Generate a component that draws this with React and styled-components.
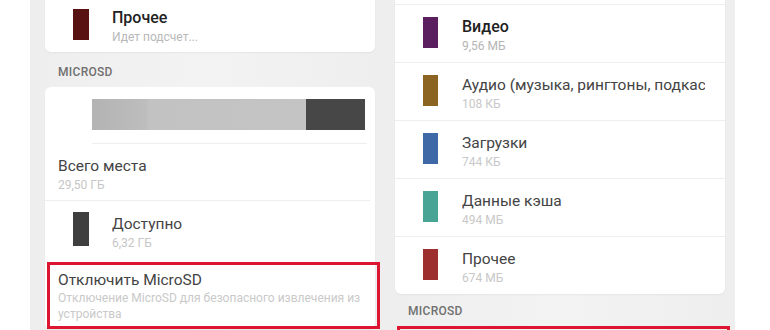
import React from "react";
import styled, { createGlobalStyle } from "styled-components";

const Global = createGlobalStyle`
  html, body { margin: 0; padding: 0; background: #ffffff; }
  body { font-family: Roboto, "Noto Sans", "Liberation Sans", sans-serif; }
  * { box-sizing: border-box; }
`;

const Page = styled.div`
  display: flex;
  height: 330px;
  width: 770px;
  overflow: hidden;
  padding-left: 30px;
  background: #ffffff;
`;

const Phone = styled.div`
  width: ${(p) => p.$w}px;
  height: 330px;
  padding: 0 ${(p) => p.$pr}px 0 ${(p) => p.$pl}px;
  background: linear-gradient(90deg, #eeeeee 0%, #f3f3f3 50%, #eeeeee 100%);
  display: flex;
  flex-direction: column;
`;

const Card = styled.div`
  background: #ffffff;
  border-radius: ${(p) => (p.$top ? "0 0 6px 6px" : "6px")};
  box-shadow: 0 1px 2px rgba(0, 0, 0, 0.05);
  padding-top: ${(p) => p.$pt || 0}px;
  flex-shrink: 0;
`;

const Row = styled.div`
  display: flex;
  align-items: flex-start;
  height: ${(p) => p.$h}px;
  padding-left: 28px;
  border-top: ${(p) => (p.$line ? "1px solid #eeeeee" : "none")};
`;

const Swatch = styled.div`
  width: ${(p) => p.$w || 16}px;
  height: ${(p) => p.$hh || 31}px;
  margin-top: ${(p) => p.$mt}px;
  margin-right: ${(p) => p.$gap || 23}px;
  background: ${(p) => p.$c};
  flex-shrink: 0;
`;

const TextBlock = styled.div`
  margin-top: ${(p) => p.$mt}px;
  min-width: 0;
  flex: 1;
  overflow: hidden;
  padding-right: ${(p) => p.$pr || 0}px;
`;

const Title = styled.div`
  font-size: ${(p) => (p.$big ? 15.5 : 16)}px;
  line-height: 20px;
  font-weight: ${(p) => (p.$bold ? 500 : 400)};
  color: ${(p) => (p.$bold ? "#222222" : "#444444")};
  white-space: nowrap;
  overflow: hidden;
`;

const Sub = styled.div`
  font-size: 12px;
  line-height: 16px;
  margin-top: 1px;
  color: ${(p) => p.$c || "#c6c6c6"};
  white-space: nowrap;
`;

const SubWrap = styled.div`
  font-size: 12px;
  line-height: 16px;
  color: #c9c9c9;
`;

const Label = styled.div`
  font-size: 12px;
  line-height: 14px;
  font-weight: 500;
  letter-spacing: 0.3px;
  color: #707070;
  padding: ${(p) => p.$pt}px 0 ${(p) => p.$pb}px 13px;
  flex-shrink: 0;
`;

const BarWrap = styled.div`
  display: flex;
  height: 31px;
  margin: 0 10px 0 47px;
`;

const BarUsed = styled.div`
  flex: 1;
  background: linear-gradient(
    90deg,
    #b3b3b3 0%,
    #bdbdbd 25%,
    #c2c2c2 27%,
    #c4c4c4 100%
  );
`;

const BarFree = styled.div`
  width: 59px;
  background: #474747;
`;

const Divider = styled.div`
  height: 1px;
  background: #eeeeee;
  margin: ${(p) => p.$mt || 0}px ${(p) => p.$r || 0}px 0 ${(p) => p.$l || 0}px;
`;

const PlainRow = styled.div`
  height: 56px;
  padding: 12px 0 0 13px;
`;

const Highlight = styled.div`
  border: 3px solid #dc1530;
  margin-left: 2px;
  margin-right: -5px;
  margin-top: ${(p) => p.$mt || 0}px;
  padding: ${(p) => p.$pad || "5px 8px 4px"};
  height: ${(p) => (p.$h ? `${p.$h}px` : "auto")};
  flex-shrink: 0;
`;

const rightRows = [
  { c: "#5b1e5e", t: "Видео", s: "9,56 МБ", bold: true },
  { c: "#8c6421", t: "Аудио (музыка, рингтоны, подкасты)", s: "108 КБ" },
  { c: "#3f68a6", t: "Загрузки", s: "744 КБ" },
  { c: "#48a595", t: "Данные кэша", s: "494 МБ" },
  { c: "#9e2f2f", t: "Прочее", s: "674 МБ" },
];

export default function App() {
  return (
    <>
      <Global />
      <Page>
        <Phone $w={355} $pl={15} $pr={10}>
          <Card $top>
            <Row $h={52}>
              <Swatch $c="#581212" $mt={9} />
              <TextBlock $mt={8}>
                <Title $bold>Прочее</Title>
                <Sub $c="#b8b8b8">Идет подсчет...</Sub>
              </TextBlock>
            </Row>
          </Card>
          <Label $pt={13} $pb={8}>MICROSD</Label>
          <Card $pt={12}>
            <BarWrap>
              <BarUsed />
              <BarFree />
            </BarWrap>
            <Divider $mt={13} $l={47} $r={8} />
            <PlainRow>
              <Title $big>Всего места</Title>
              <Sub>29,50 ГБ</Sub>
            </PlainRow>
            <Divider $r={5} />
            <Row $h={61}>
              <Swatch $c="#3f3f3f" $mt={11} $hh={34} />
              <TextBlock $mt={13}>
                <Title $big>Доступно</Title>
                <Sub>6,32 ГБ</Sub>
              </TextBlock>
            </Row>
            <Highlight>
              <Title $big>Отключить MicroSD</Title>
              <SubWrap>
                Отключение MicroSD для безопасного извлечения из устройства
              </SubWrap>
            </Highlight>
          </Card>
        </Phone>
        <Phone $w={350} $pl={10} $pr={10}>
          <Card $top $pt={4}>
            {rightRows.map((r) => (
              <Row key={r.t} $h={58} $line>
                <Swatch $c={r.c} $w={15} $mt={12} $gap={24} />
                <TextBlock $mt={12} $pr={20}>
                  <Title $big={!r.bold} $bold={r.bold}>
                    {r.t}
                  </Title>
                  <Sub $c={r.bold ? "#b5b5b5" : "#c8c8c8"}>{r.s}</Sub>
                </TextBlock>
              </Row>
            ))}
          </Card>
          <Label $pt={10} $pb={8}>MICROSD</Label>
          <Highlight $h={20} $pad="0" />
        </Phone>
      </Page>
    </>
  );
}
